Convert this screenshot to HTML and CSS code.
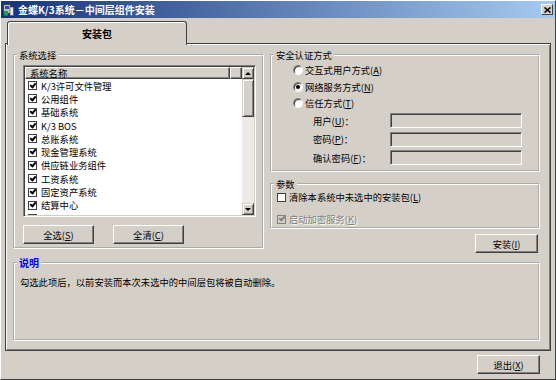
FILE: index.html
```html
<!DOCTYPE html>
<html lang="zh-CN">
<head>
  <meta charset="UTF-8">
  <title>金蝶K/3系统－中间层组件安装</title>
  <link rel="stylesheet" href="styles.css">
</head>
<body>
<div class="window">
  <div class="titlebar">
    <svg class="app-icon" viewBox="0 0 11 12">
      <rect x="0.5" y="0.5" width="7" height="9" fill="#c0c0c0" stroke="#404040"/>
      <rect x="2" y="2" width="4" height="3" fill="#2050c0"/>
      <rect x="1" y="7" width="4" height="4.5" fill="#20a040"/>
      <rect x="7" y="3" width="3.5" height="8.5" fill="#e8e8e8" stroke="#404040" stroke-width="0.6"/>
    </svg>
    <span class="title">金蝶K/3系统－中间层组件安装</span>
    <span class="close-btn">
      <svg width="7" height="6" viewBox="0 0 7 6"><path d="M0.5 0.5 L6.5 5.5 M6.5 0.5 L0.5 5.5" stroke="#000" stroke-width="1.6"/></svg>
    </span>
  </div>

  <div class="tabs">
    <div class="tab">安装包</div>
  </div>

  <div class="panel">
    <div class="top-row">
      <fieldset class="group sys-group">
        <legend>系统选择</legend>
        <div class="listbox">
          <div class="list-body">
            <div class="list-header">
              <span class="col-name">系统名称</span>
              <span class="col-rest"></span>
            </div>
            <div class="list-item"><span class="chk checked"></span>K/3许可文件管理</div>
            <div class="list-item"><span class="chk checked"></span>公用组件</div>
            <div class="list-item"><span class="chk checked"></span>基础系统</div>
            <div class="list-item"><span class="chk checked"></span>K/3 BOS</div>
            <div class="list-item"><span class="chk checked"></span>总账系统</div>
            <div class="list-item"><span class="chk checked"></span>现金管理系统</div>
            <div class="list-item"><span class="chk checked"></span>供应链业务组件</div>
            <div class="list-item"><span class="chk checked"></span>工资系统</div>
            <div class="list-item"><span class="chk checked"></span>固定资产系统</div>
            <div class="list-item"><span class="chk checked"></span>结算中心</div>
            <div class="list-item"><span class="chk checked"></span>成本系统</div>
          </div>
          <div class="scrollbar">
            <span class="sb-btn up"></span>
            <span class="sb-thumb"></span>
            <span class="sb-track"></span>
            <span class="sb-btn down"></span>
          </div>
        </div>
        <div class="btn-row">
          <button class="btn">全选(<u>S</u>)</button>
          <button class="btn">全清(<u>C</u>)</button>
        </div>
      </fieldset>

      <div class="right-col">
        <fieldset class="group auth-group">
          <legend>安全认证方式</legend>
          <div class="radio-row"><span class="radio"></span>交互式用户方式(<u>A</u>)</div>
          <div class="radio-row"><span class="radio on"></span>网络服务方式(<u>N</u>)</div>
          <div class="radio-row"><span class="radio"></span>信任方式(<u>T</u>)</div>
          <div class="field-row"><span class="field-label">用户(<u>U</u>)：</span><span class="field-input"></span></div>
          <div class="field-row"><span class="field-label">密码(<u>P</u>)：</span><span class="field-input"></span></div>
          <div class="field-row"><span class="field-label">确认密码(<u>F</u>)：</span><span class="field-input"></span></div>
        </fieldset>

        <fieldset class="group param-group">
          <legend>参数</legend>
          <div class="check-row"><span class="chk"></span>清除本系统中未选中的安装包(<u>L</u>)</div>
          <div class="check-row disabled"><span class="chk checked"></span>启动加密服务(<u>K</u>)</div>
        </fieldset>

        <button class="btn small-btn install-btn">安装(<u>I</u>)</button>
      </div>
    </div>

    <fieldset class="group desc-group">
      <legend>说明</legend>
      <p>勾选此项后，以前安装而本次未选中的中间层包将被自动删除。</p>
    </fieldset>
  </div>

  <div class="footer">
    <button class="btn small-btn">退出(<u>X</u>)</button>
  </div>
</div>
</body>
</html>
```

FILE: styles.css
```css
body {
    margin: 0;
    font-family: "Noto Sans CJK SC", "Liberation Sans", sans-serif;
    font-size: 9.3px;
    color: #000;
    background: #d4d0c8;
}

.window {
    width: 556px;
    height: 380px;
    box-sizing: border-box;
    border: 1px solid;
    border-color: #fff #404040 #404040 #fff;
    background: #d4d0c8;
}

/* title bar */
.titlebar {
    height: 17px;
    display: flex;
    align-items: center;
    padding-left: 2px;
    background: linear-gradient(to right, #16337a, #a6caf0);
}

.app-icon {
    width: 11px;
    height: 12px;
}

.title {
    margin-left: 4px;
    color: #fff;
    font-weight: bold;
    font-size: 10px;
    line-height: 12px;
}

.close-btn {
    margin-left: auto;
    margin-right: 2px;
    width: 12px;
    height: 11px;
    box-sizing: border-box;
    background: #d4d0c8;
    border: 1px solid;
    border-color: #fff #404040 #404040 #fff;
    display: flex;
    align-items: center;
    justify-content: center;
}

/* tab */
.tabs {
    display: flex;
    margin-top: 3px;
    margin-bottom: -2px;
    padding-left: 6px;
}

.tab {
    position: relative;
    z-index: 1;
    width: 180px;
    height: 24px;
    box-sizing: border-box;
    border: 1px solid #404040;
    border-bottom: none;
    border-radius: 3px 3px 0 0;
    box-shadow: inset 1px 1px 0 #fff;
    background: #d4d0c8;
    font-weight: bold;
    font-size: 10px;
    display: flex;
    align-items: center;
    justify-content: center;
    padding-bottom: 1px;
}

.panel {
    height: 308px;
    box-sizing: border-box;
    margin: 0 4px;
    padding: 5px 10px 9px 7px;
    border: 1px solid #404040;
    box-shadow: inset 1px 1px 0 #fff, inset -1px -1px 0 #808080;
    display: flex;
    flex-direction: column;
}

.top-row {
    display: flex;
    align-items: flex-start;
}

/* group boxes */
.group {
    margin: 0;
    padding: 0;
    min-width: 0;
    border: 2px groove #fff;
    box-sizing: border-box;
}

.group legend {
    padding: 0 2px;
    margin-left: 2px;
    line-height: 12px;
}

.sys-group {
    width: 251px;
    padding-bottom: 3px;
}

/* list view */
.listbox {
    display: flex;
    width: 233px;
    height: 152px;
    box-sizing: border-box;
    margin: 4px 0 0 8px;
    padding: 1px;
    border: 1px solid;
    border-color: #808080 #fff #fff #808080;
    box-shadow: inset 1px 1px 0 #404040, inset -1px -1px 0 #d4d0c8;
    background: #fff;
}

.list-body {
    flex: 1;
    overflow: hidden;
}

.list-header {
    display: flex;
    height: 12px;
}

.col-name,
.col-rest {
    box-sizing: border-box;
    height: 12px;
    line-height: 10px;
    background: #d4d0c8;
    border: 1px solid;
    border-color: #fff #404040 #404040 #fff;
    box-shadow: inset -1px -1px 0 #808080;
}

.col-name {
    width: 205px;
    padding-left: 4px;
}

.col-rest {
    flex: 1;
}

.list-item {
    display: flex;
    align-items: center;
    height: 13.3px;
    padding-left: 3px;
    white-space: nowrap;
}

.chk {
    position: relative;
    width: 9px;
    height: 9px;
    box-sizing: border-box;
    flex-shrink: 0;
    margin-right: 4px;
    border: 1px solid #404040;
    background: #fff;
}

.chk.checked::after {
    content: "";
    position: absolute;
    left: 2px;
    top: -0.5px;
    width: 2px;
    height: 4px;
    border: solid #000;
    border-width: 0 2px 2px 0;
    transform: rotate(40deg);
}

.scrollbar {
    width: 12px;
    display: flex;
    flex-direction: column;
    background: #eceae6;
}

.sb-btn,
.sb-thumb {
    box-sizing: border-box;
    background: #d4d0c8;
    border: 1px solid;
    border-color: #d4d0c8 #404040 #404040 #d4d0c8;
    box-shadow: inset 1px 1px 0 #fff, inset -1px -1px 0 #808080;
}

.sb-btn {
    height: 12px;
    display: flex;
    align-items: center;
    justify-content: center;
}

.sb-btn::after {
    content: "";
    border-left: 3px solid transparent;
    border-right: 3px solid transparent;
}

.sb-btn.up::after {
    border-bottom: 3px solid #000;
}

.sb-btn.down::after {
    border-top: 3px solid #000;
}

.sb-thumb {
    height: 38px;
}

.sb-track {
    flex: 1;
}

/* buttons */
.btn {
    font: inherit;
    color: #000;
    width: 71px;
    height: 19px;
    padding: 0;
    background: #d4d0c8;
    border: 1px solid;
    border-color: #fff #404040 #404040 #fff;
    box-shadow: inset -1px -1px 0 #808080;
}

.small-btn {
    width: 63px;
}

.btn-row {
    display: flex;
    gap: 19px;
    margin: 8px 0 0 8px;
}

/* right column */
.right-col {
    width: 270px;
    margin-left: 6px;
    display: flex;
    flex-direction: column;
}

.auth-group {
    padding: 1px 0 3px;
}

.radio-row {
    display: flex;
    align-items: center;
    height: 16.5px;
    padding-left: 21px;
}

.radio {
    position: relative;
    width: 10px;
    height: 10px;
    box-sizing: border-box;
    margin-right: 2px;
    border-radius: 50%;
    border: 1px solid;
    border-color: #808080 #fff #fff #808080;
    box-shadow: inset 1px 1px 0 #404040;
    background: #fff;
}

.radio.on::after {
    content: "";
    position: absolute;
    left: 2px;
    top: 2px;
    width: 4px;
    height: 4px;
    border-radius: 50%;
    background: #000;
}

.field-row {
    display: flex;
    align-items: center;
    height: 18.5px;
    padding-left: 41px;
}

.field-label {
    width: 77px;
}

.field-input {
    width: 132px;
    height: 15px;
    box-sizing: border-box;
    border: 1px solid;
    border-color: #808080 #fff #fff #808080;
    box-shadow: inset 1px 1px 0 #404040;
    background: #d4d0c8;
}

.param-group {
    margin-top: 6px;
    padding-bottom: 1px;
}

.check-row {
    display: flex;
    align-items: center;
    height: 14px;
    padding-left: 5px;
}

.check-row .chk {
    margin-right: 3px;
}

.check-row + .check-row {
    margin-top: 8px;
}

.check-row.disabled {
    color: #808080;
    text-shadow: 1px 1px 0 #fff;
}

.check-row.disabled .chk {
    background: #d4d0c8;
    border-color: #808080;
}

.check-row.disabled .chk::after {
    border-color: #808080;
}

.install-btn {
    align-self: flex-end;
    margin: 5px 2px 0 0;
}

/* description */
.desc-group {
    flex: 1;
    margin-top: 4px;
}

.desc-group legend {
    color: #0000ff;
    font-weight: bold;
    font-size: 10px;
}

.desc-group p {
    margin: 7px 0 0 5px;
    line-height: 12px;
}

.footer {
    display: flex;
    justify-content: flex-end;
    margin-top: 4px;
    padding-right: 15px;
}
```
